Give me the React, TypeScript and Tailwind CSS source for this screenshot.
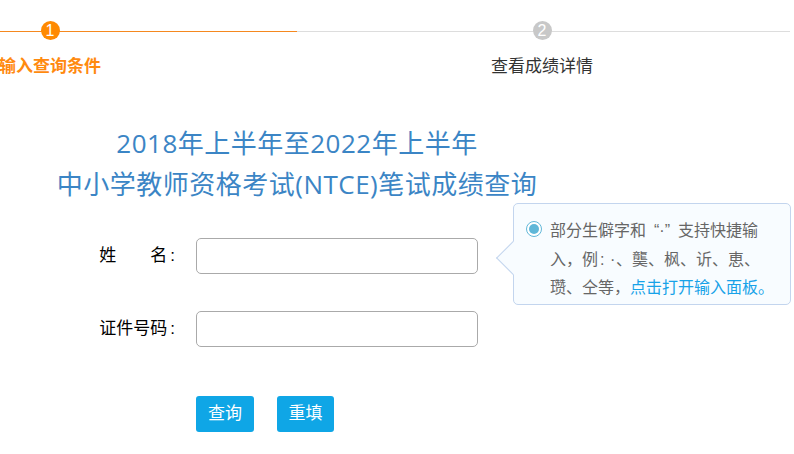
const FONT = "font-['Liberation_Sans','Noto_Sans_CJK_SC',sans-serif]";

function Step({ num, label, active, className }: { num: number; label: string; active?: boolean; className: string }) {
  return (
    <div className={className}>
      <div className={active ? "h-px bg-[#f5881f]" : "h-px bg-[#dddddd]"} />
      <div className="absolute top-[-10px] left-0 flex w-[100px] flex-col items-center">
        <div
          className={
            "flex h-[19px] w-[19px] items-center justify-center rounded-full text-[16px] leading-none text-white " +
            (active ? "bg-[#ff8a00]" : "bg-[#c8c8c8]")
          }
        >
          {num}
        </div>
        <div
          className={
            "mt-[15px] whitespace-nowrap text-[17px] leading-[24px] " +
            (active ? "font-bold text-[#ff8a0f]" : "text-[#333333]")
          }
        >
          {label}
        </div>
      </div>
    </div>
  );
}

function Field({ label }: { label: React.ReactNode }) {
  return (
    <div className="flex h-9 items-center">
      <div className="flex w-[196px] justify-end pr-[21px] text-[17px] text-black">
        {label}
        <span className="ml-[3px]">:</span>
      </div>
      <input className="h-9 w-[282px] rounded-[5px] border border-[#aaaaaa] bg-white outline-none" />
    </div>
  );
}

export default function App() {
  return (
    <div className={"relative h-[454px] w-[794px] overflow-hidden bg-white " + FONT}>
      <div className="flex pt-[31px]">
        <Step num={1} label="输入查询条件" active className="relative w-[297px]" />
        <Step num={2} label="查看成绩详情" className="relative w-[493px] [&>div:last-child]:left-[195px]" />
      </div>

      <div className="mt-[97px] w-[594px] text-center font-['Open_Sans','Noto_Sans_CJK_SC',sans-serif] text-[26px] text-[#3b85c5]">
        <div className="h-[28px] leading-[28px] tracking-[0.5px]">2018年上半年至2022年上半年</div>
        <div className="mt-[13px] h-[28px] leading-[28px] tracking-[0.5px]">中小学教师资格考试(NTCE)笔试成绩查询</div>
      </div>

      <div className="mt-[40px] flex flex-col gap-[37px]">
        <Field
          label={
            <span className="flex w-[68px] justify-between">
              <span>姓</span>
              <span>名</span>
            </span>
          }
        />
        <Field label="证件号码" />
      </div>

      <div className="ml-[196px] mt-[49px] flex gap-[23px]">
        <button className="h-9 w-[58px] rounded-[3px] bg-[#0fa6e6] text-[17px] text-white">查询</button>
        <button className="h-9 w-[57px] rounded-[3px] bg-[#0fa6e6] text-[17px] text-white">重填</button>
      </div>

      <div className="absolute left-[513px] top-[203px] h-[102px] w-[278px] rounded-[5px] border border-[#c3d5ee] bg-[#f8fcff] pl-[36px] pt-[12px] font-['Noto_Sans_CJK_SC',sans-serif] text-[16px] leading-[27.5px] whitespace-nowrap text-[#666666]">
        <div className="absolute left-[-13px] top-[42px] h-6 w-6 rotate-45 border-b border-l border-[#c3d5ee] bg-[#f8fcff]" />
        <div className="absolute left-[12px] top-[17px] flex h-[16px] w-[16px] items-center justify-center rounded-full border border-[#62b8d9] bg-white">
          <div className="h-[10px] w-[10px] rounded-full bg-[#5fb7d8]" />
        </div>
        <div className="relative">
          部分生僻字和<span className="inline-block w-[32px] text-center font-['Liberation_Sans',sans-serif]">“·”</span>支持快捷输
        </div>
        <div className="relative">
          {"入\uFF0C例"}
          <span className="inline-block w-[12px] pl-[2px] font-['Liberation_Sans',sans-serif]">:</span>
          <span className="inline-block w-[6px] font-['Liberation_Sans',sans-serif]">·</span>
          {"、\u9F91、枫、\u4723、恵、"}
        </div>
        <div className="relative">
          {"\u74D2、仝等\uFF0C"}
          <span className="text-[#17a2e8]">点击打开输入面板。</span>
        </div>
      </div>
    </div>
  );
}
